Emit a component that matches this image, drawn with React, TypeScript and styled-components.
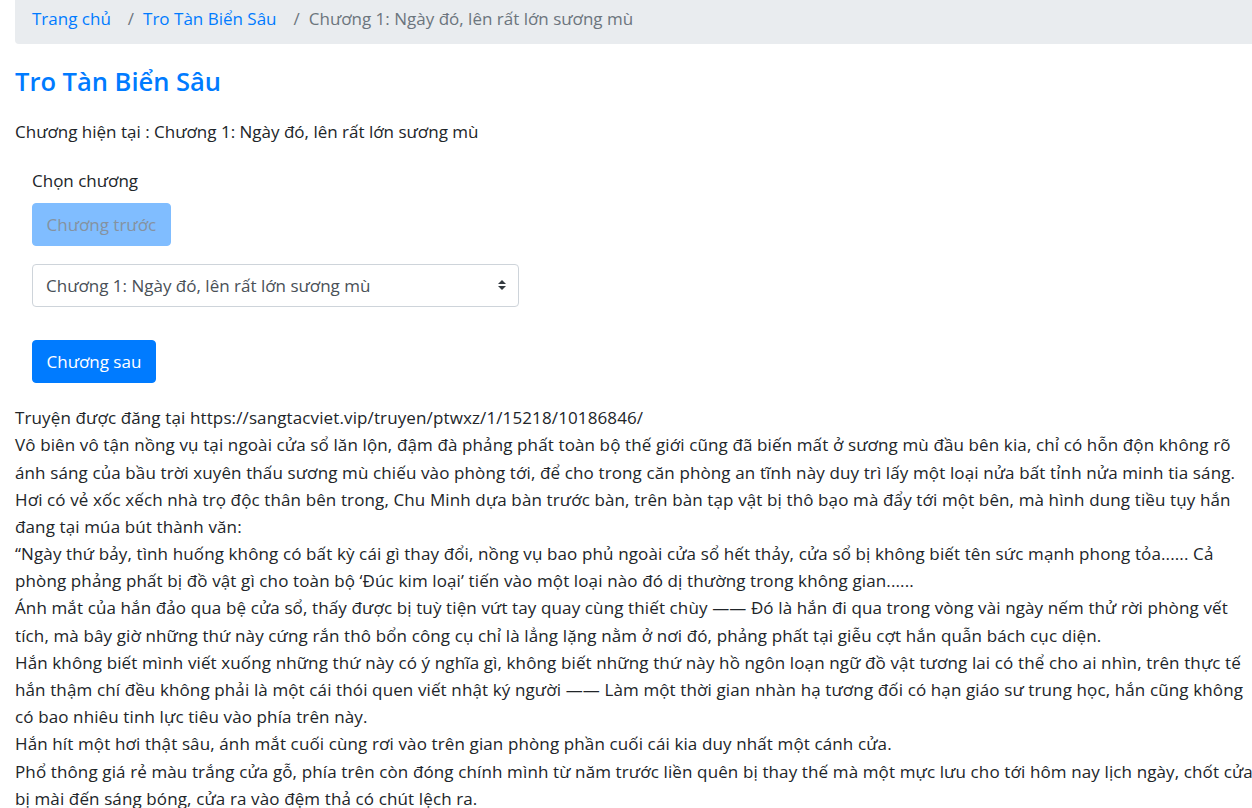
import React from "react";
import styled, { createGlobalStyle } from "styled-components";

const GlobalStyle = createGlobalStyle`
  html { overflow: hidden; font-size: 17px; }
  body {
    margin: 0;
    font-family: "Open Sans", "Noto Sans", Roboto, "Liberation Sans", Arial, sans-serif;
    font-size: 17px;
    line-height: 1.6;
    color: #212529;
    background: #fff;
  }
  * { box-sizing: border-box; }
`;

const Page = styled.div`
  padding: 0 0 0 15px;
`;

const Breadcrumb = styled.ol`
  display: flex;
  flex-wrap: wrap;
  list-style: none;
  margin: 0 0 22px;
  padding: 5px 17px 12px 17px;
  background: #e9ecef;
  border-radius: 0 0 0 4px;
`;

const Crumb = styled.li<{ $active?: boolean }>`
  color: ${(p) => (p.$active ? "#6c757d" : "#007bff")};
  &:not(:first-child)::before {
    content: "/";
    color: #6c757d;
    padding: 0 9px 0 17px;
  }
`;

const CrumbLink = styled.a`
  color: #007bff;
  text-decoration: none;
`;

const Title = styled.h3`
  margin: 0 0 21px;
  font-size: 25.5px;
  font-weight: 600;
  line-height: 1.2;
  color: #007bff;
`;

const Current = styled.p`
  margin: 0 0 22px;
`;

const ChapterForm = styled.form`
  display: flex;
  flex-direction: column;
  align-items: flex-start;
  padding: 0 17px;
  margin-bottom: 21px;
`;

const Label = styled.label`
  margin-bottom: 9px;
`;

const Button = styled.button<{ $disabledLook?: boolean }>`
  font: inherit;
  line-height: 27px;
  padding: 7px 13.5px;
  border: 1px solid ${(p) => (p.$disabledLook ? "#80bdff" : "#007bff")};
  border-radius: 4px;
  background: ${(p) => (p.$disabledLook ? "#80bdff" : "#007bff")};
  color: ${(p) => (p.$disabledLook ? "#8592a0" : "#fff")};
  cursor: ${(p) => (p.$disabledLook ? "default" : "pointer")};
`;

const SelectWrap = styled.div`
  position: relative;
  width: 487px;
  margin: 18px 0 33px;
`;

const Select = styled.select`
  appearance: none;
  -webkit-appearance: none;
  width: 100%;
  height: 43px;
  font: inherit;
  color: #495057;
  padding: 0 28px 0 13px;
  border: 1px solid #ced4da;
  border-radius: 4px;
  background: #fff;
`;

const Arrow = styled.svg`
  position: absolute;
  right: 13px;
  top: 16px;
  width: 8px;
  height: 10px;
  pointer-events: none;
`;

const Content = styled.div`
  letter-spacing: 0.12px;
`;

const Paragraph = styled.div`
  white-space: nowrap;
`;

const paragraphs: string[][] = [
  ["Truyện được đăng tại https://sangtacviet.vip/truyen/ptwxz/1/15218/10186846/"],
  [
    "Vô biên vô tận nồng vụ tại ngoài cửa sổ lăn lộn, đậm đà phảng phất toàn bộ thế giới cũng đã biến mất ở sương mù đầu bên kia, chỉ có hỗn độn không rõ",
    "ánh sáng của bầu trời xuyên thấu sương mù chiếu vào phòng tới, để cho trong căn phòng an tĩnh này duy trì lấy một loại nửa bất tỉnh nửa minh tia sáng.",
  ],
  [
    "Hơi có vẻ xốc xếch nhà trọ độc thân bên trong, Chu Minh dựa bàn trước bàn, trên bàn tạp vật bị thô bạo mà đẩy tới một bên, mà hình dung tiều tụy hắn",
    "đang tại múa bút thành văn:",
  ],
  [
    "“Ngày thứ bảy, tình huống không có bất kỳ cái gì thay đổi, nồng vụ bao phủ ngoài cửa sổ hết thảy, cửa sổ bị không biết tên sức mạnh phong tỏa...... Cả",
    "phòng phảng phất bị đồ vật gì cho toàn bộ ‘Đúc kim loại’ tiến vào một loại nào đó dị thường trong không gian......",
  ],
  [
    "Ánh mắt của hắn đảo qua bệ cửa sổ, thấy được bị tuỳ tiện vứt tay quay cùng thiết chùy —— Đó là hắn đi qua trong vòng vài ngày nếm thử rời phòng vết",
    "tích, mà bây giờ những thứ này cứng rắn thô bổn công cụ chỉ là lẳng lặng nằm ở nơi đó, phảng phất tại giễu cợt hắn quẫn bách cục diện.",
  ],
  [
    "Hắn không biết mình viết xuống những thứ này có ý nghĩa gì, không biết những thứ này hồ ngôn loạn ngữ đồ vật tương lai có thể cho ai nhìn, trên thực tế",
    "hắn thậm chí đều không phải là một cái thói quen viết nhật ký người —— Làm một thời gian nhàn hạ tương đối có hạn giáo sư trung học, hắn cũng không",
    "có bao nhiêu tinh lực tiêu vào phía trên này.",
  ],
  ["Hắn hít một hơi thật sâu, ánh mắt cuối cùng rơi vào trên gian phòng phần cuối cái kia duy nhất một cánh cửa."],
  [
    "Phổ thông giá rẻ màu trắng cửa gỗ, phía trên còn đóng chính mình từ năm trước liền quên bị thay thế mà một mực lưu cho tới hôm nay lịch ngày, chốt cửa",
    "bị mài đến sáng bóng, cửa ra vào đệm thả có chút lệch ra.",
  ],
];

export default function App() {
  const chapter = "Chương 1: Ngày đó, lên rất lớn sương mù";
  return (
    <>
      <GlobalStyle />
      <Page>
        <nav aria-label="breadcrumb">
          <Breadcrumb>
            <Crumb>
              <CrumbLink href="#">Trang chủ</CrumbLink>
            </Crumb>
            <Crumb>
              <CrumbLink href="#">Tro Tàn Biển Sâu</CrumbLink>
            </Crumb>
            <Crumb $active>{chapter}</Crumb>
          </Breadcrumb>
        </nav>
        <Title>Tro Tàn Biển Sâu</Title>
        <Current>Chương hiện tại : {chapter}</Current>
        <ChapterForm onSubmit={(e) => e.preventDefault()}>
          <Label>Chọn chương</Label>
          <Button type="button" $disabledLook disabled>
            Chương trước
          </Button>
          <SelectWrap>
            <Select defaultValue="1">
              <option value="1">{chapter}</option>
            </Select>
            <Arrow viewBox="0 0 4 5">
              <path fill="#343a40" d="M2 0L0 2h4zm0 5L0 3h4z" />
            </Arrow>
          </SelectWrap>
          <Button type="button">Chương sau</Button>
        </ChapterForm>
        <Content>
          {paragraphs.map((lines, i) => (
            <Paragraph key={i}>
              {lines.map((l, j) => (
                <React.Fragment key={j}>
                  {j > 0 && <br />}
                  {l}
                </React.Fragment>
              ))}
            </Paragraph>
          ))}
        </Content>
      </Page>
    </>
  );
}
